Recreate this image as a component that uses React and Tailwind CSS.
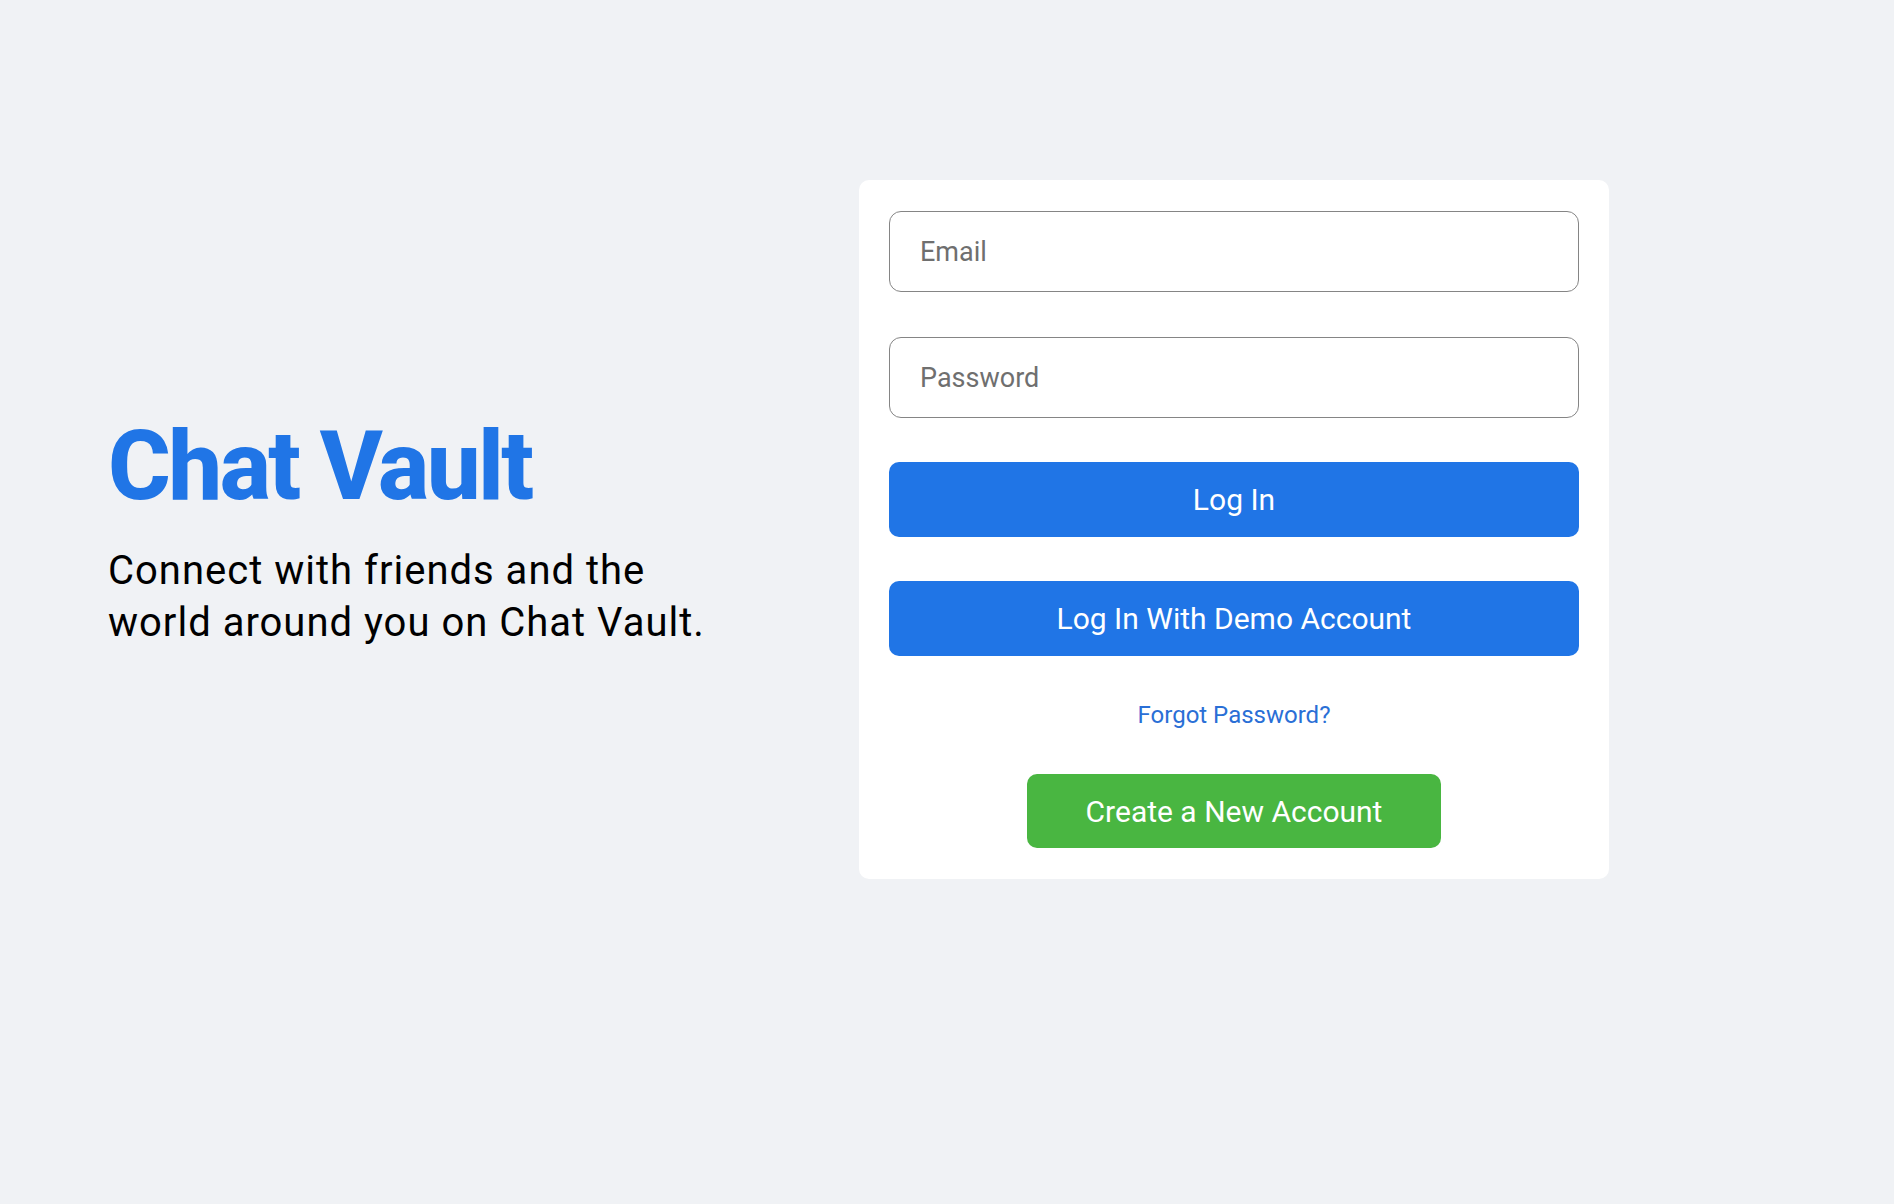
export default function App() {
  return (
    <div className="min-h-screen bg-[#f0f2f5] font-['Roboto',_'Liberation_Sans',_sans-serif]">
      <div className="flex items-center pt-[180px] pl-[108px]">
        <div className="w-[620px]">
          <h1 className="text-[96px] leading-[1.172] font-extrabold tracking-[-2.6px] text-[#2075e6]">Chat Vault</h1>
          <p className="mt-[22px] w-[620px] text-[40px] leading-[52px] tracking-[1px] text-black">
            Connect with friends and the world around you on Chat Vault.
          </p>
        </div>
        <div className="ml-[131px] w-[750px] bg-white rounded-[10px] px-[30px] py-[31px] flex flex-col">
          <input
            type="email"
            placeholder="Email"
            className="h-[81px] w-full rounded-[12px] border border-[#858585] px-[30px] text-[27px] text-[#333] placeholder:text-[#6f6f6f] outline-none"
          />
          <input
            type="password"
            placeholder="Password"
            className="mt-[45px] h-[81px] w-full rounded-[12px] border border-[#858585] px-[30px] text-[27px] text-[#333] placeholder:text-[#6f6f6f] outline-none"
          />
          <button className="mt-[44px] h-[75px] w-full rounded-[10px] bg-[#2075e6] text-[30px] text-white">
            Log In
          </button>
          <button className="mt-[44px] h-[75px] w-full rounded-[10px] bg-[#2075e6] text-[30px] text-white">
            Log In With Demo Account
          </button>
          <a className="mt-[45px] block text-center text-[24px] leading-[28px] text-[#2a6fd6]">
            Forgot Password?
          </a>
          <div className="mt-[45px] flex justify-center">
            <button className="h-[74px] w-[414px] rounded-[10px] bg-[#49b641] text-[30px] text-white">
              Create a New Account
            </button>
          </div>
        </div>
      </div>
    </div>
  );
}
